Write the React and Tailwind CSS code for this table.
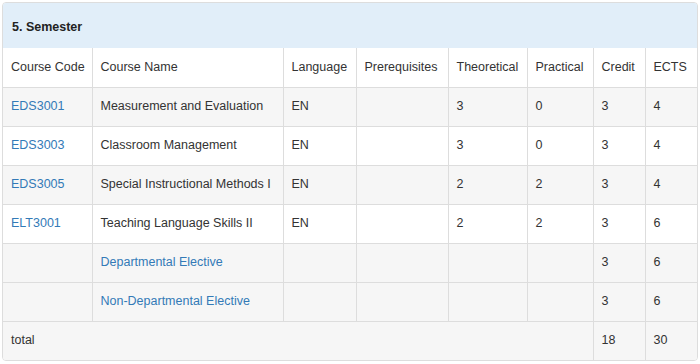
const columns = ['Course Code', 'Course Name', 'Language', 'Prerequisites', 'Theoretical', 'Practical', 'Credit', 'ECTS']
const widths = ['w-[89px]', 'w-[191px]', 'w-[73px]', 'w-[92px]', 'w-[79px]', 'w-[66px]', 'w-[52px]', 'w-[52px]']

const courses = [
  { code: 'EDS3001', name: 'Measurement and Evaluation', lang: 'EN', t: 3, p: 0, credit: 3, ects: 4 },
  { code: 'EDS3003', name: 'Classroom Management', lang: 'EN', t: 3, p: 0, credit: 3, ects: 4 },
  { code: 'EDS3005', name: 'Special Instructional Methods I', lang: 'EN', t: 2, p: 2, credit: 3, ects: 4 },
  { code: 'ELT3001', name: 'Teaching Language Skills II', lang: 'EN', t: 2, p: 2, credit: 3, ects: 6 },
  { elective: true, name: 'Departmental Elective', credit: 3, ects: 6 },
  { elective: true, name: 'Non-Departmental Elective', credit: 3, ects: 6 },
]

const cell = 'border border-[#dddddd] pl-2 pr-1 h-[39px] align-middle text-left font-normal whitespace-nowrap overflow-hidden'

export default function App() {
  return (
    <div className="w-[700px] h-[364px] bg-white p-[2px] font-['Liberation_Sans',Arial,sans-serif] text-[12.5px] text-[#333333]">
      <div className="border border-[#dddddd] rounded-[4px] overflow-hidden">
        {/* Panel heading */}
        <div className="h-[45px] bg-[#e1eef9] px-[9px] pt-[3px] flex items-center font-bold text-[12.5px] text-[#222222]">
          5. Semester
        </div>

        <table className="w-full table-fixed border-collapse border-hidden">
          <colgroup>
            {widths.map((w, i) => (
              <col key={i} className={w} />
            ))}
          </colgroup>
          <thead>
            <tr className="bg-white">
              {columns.map((c) => (
                <th key={c} className={cell}>{c}</th>
              ))}
            </tr>
          </thead>
          <tbody>
            {courses.map((c, i) => (
              <tr key={c.name} className={i % 2 === 0 || c.elective ? 'bg-[#f6f6f6]' : 'bg-white'}>
                <td className={cell}>
                  {c.code && <a className="text-[#337ab7]">{c.code}</a>}
                </td>
                <td className={cell}>
                  {c.elective ? <a className="text-[#337ab7]">{c.name}</a> : c.name}
                </td>
                <td className={cell}>{c.lang}</td>
                <td className={cell}></td>
                <td className={cell}>{c.t}</td>
                <td className={cell}>{c.p}</td>
                <td className={cell}>{c.credit}</td>
                <td className={cell}>{c.ects}</td>
              </tr>
            ))}
            <tr className="bg-[#f6f6f6]">
              <td colSpan={6} className={cell}>total</td>
              <td className={cell}>18</td>
              <td className={cell}>30</td>
            </tr>
          </tbody>
        </table>
      </div>
    </div>
  )
}
